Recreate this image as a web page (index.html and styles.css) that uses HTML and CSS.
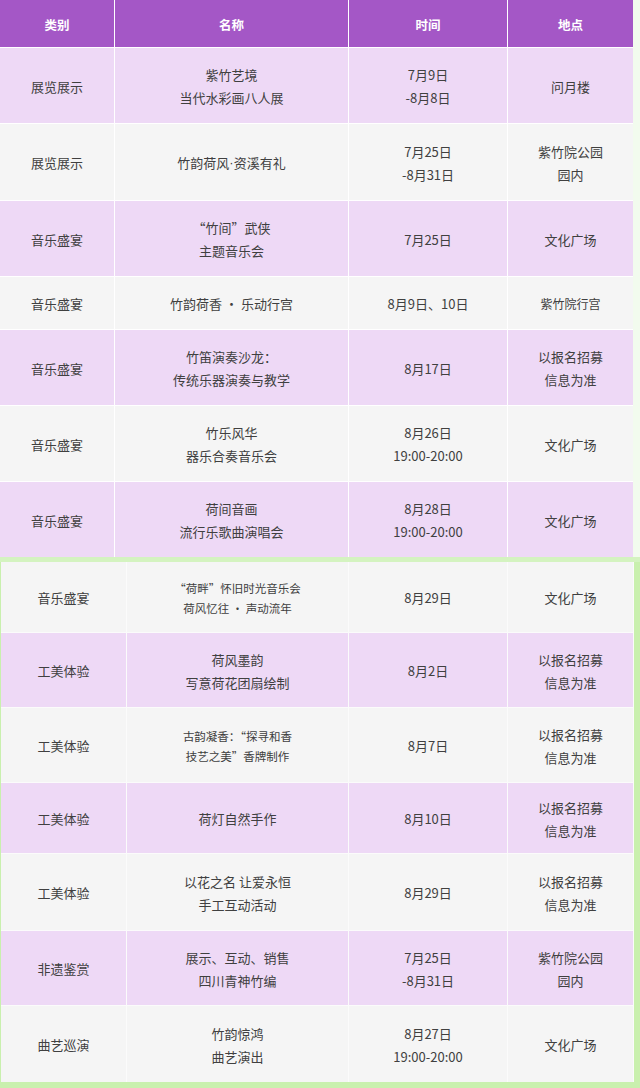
FILE: index.html
```html
<!DOCTYPE html>
<html lang="zh-CN">
<head>
<meta charset="utf-8">
<title>活动安排</title>
<link rel="stylesheet" href="styles.css">
</head>
<body>
<div class="page">
  <section class="sheet sheet-top">
    <div class="grid grid-top">
      <div class="row head"><div>类别</div><div>名称</div><div>时间</div><div>地点</div></div>
      <div class="row lav"><div>展览展示</div><div>紫竹艺境<br>当代水彩画八人展</div><div>7月9日<br>-8月8日</div><div>问月楼</div></div>
      <div class="row gray"><div>展览展示</div><div>竹韵荷风<span class="dot">·</span>资溪有礼</div><div>7月25日<br>-8月31日</div><div>紫竹院公园<br>园内</div></div>
      <div class="row lav"><div>音乐盛宴</div><div>“竹间”武侠<br>主题音乐会</div><div>7月25日</div><div>文化广场</div></div>
      <div class="row gray"><div>音乐盛宴</div><div>竹韵荷香 · 乐动行宫</div><div>8月9日、10日</div><div class="sm">紫竹院行宫</div></div>
      <div class="row lav"><div>音乐盛宴</div><div>竹笛演奏沙龙：<br>传统乐器演奏与教学</div><div>8月17日</div><div>以报名招募<br>信息为准</div></div>
      <div class="row gray"><div>音乐盛宴</div><div>竹乐风华<br>器乐合奏音乐会</div><div>8月26日<br>19:00-20:00</div><div>文化广场</div></div>
      <div class="row lav"><div>音乐盛宴</div><div>荷间音画<br>流行乐歌曲演唱会</div><div>8月28日<br>19:00-20:00</div><div>文化广场</div></div>
    </div>
  </section>
  <section class="sheet sheet-bottom">
    <div class="grid grid-bottom">
      <div class="row gray"><div>音乐盛宴</div><div class="small">“荷畔”怀旧时光音乐会<br>荷风忆往 · 声动流年</div><div>8月29日</div><div>文化广场</div></div>
      <div class="row lav"><div>工美体验</div><div>荷风墨韵<br>写意荷花团扇绘制</div><div>8月2日</div><div>以报名招募<br>信息为准</div></div>
      <div class="row gray"><div>工美体验</div><div class="small">古韵凝香：“探寻和香<br>技艺之美”香牌制作</div><div>8月7日</div><div>以报名招募<br>信息为准</div></div>
      <div class="row lav"><div>工美体验</div><div>荷灯自然手作</div><div>8月10日</div><div>以报名招募<br>信息为准</div></div>
      <div class="row gray"><div>工美体验</div><div>以花之名 让爱永恒<br>手工互动活动</div><div>8月29日</div><div>以报名招募<br>信息为准</div></div>
      <div class="row lav"><div>非遗鉴赏</div><div>展示、互动、销售<br>四川青神竹编</div><div>7月25日<br>-8月31日</div><div>紫竹院公园<br>园内</div></div>
      <div class="row gray"><div>曲艺巡演</div><div>竹韵惊鸿<br>曲艺演出</div><div>8月27日<br>19:00-20:00</div><div>文化广场</div></div>
    </div>
  </section>
</div>
</body>
</html>
```

FILE: styles.css
```css
* { box-sizing: border-box; }
html, body { margin: 0; padding: 0; }
body {
  width: 640px;
  background: #f3fbef;
  font-family: "Noto Sans CJK SC", "Noto Sans", sans-serif;
  color: #404040;
  font-size: 13px;
}
.page { display: flex; flex-direction: column; }
.sheet-top {
  padding-right: 7px;
  background: #f2fbee;
}
.sheet-bottom {
  background: #c9f0ae;
  border-top: 5px solid #d4f3c0;
  padding: 0 6px 6px 1px;
}
.grid {
  display: grid;
  gap: 1px;
  background: #ffffff;
}
.grid-top {
  grid-template-columns: 114px 233px 158px 125px;
  grid-template-rows: 47px 75px 76px 75px 52px 75px 75px 75px;
}
.grid-bottom {
  grid-template-columns: 125px 221px 158px 125px;
  grid-template-rows: 70px 74px 74px 70px 76px 74px 76px;
  background: #fbfbfb;
}
.row { display: contents; }
.row > div {
  display: flex;
  align-items: center;
  justify-content: center;
  text-align: center;
  line-height: 23px;
  padding-top: 1px;
}
.head > div {
  background: #a457c6;
  color: #ffffff;
  font-weight: 700;
  font-size: 12.5px;
}
.lav > div { background: #eed9f6; }
.gray > div { background: #f5f5f5; }
.row > .small { font-size: 11.5px; line-height: 20px; }
.row > .sm { font-size: 12px; }
.dot { font-family: "Liberation Sans", sans-serif; }
```
